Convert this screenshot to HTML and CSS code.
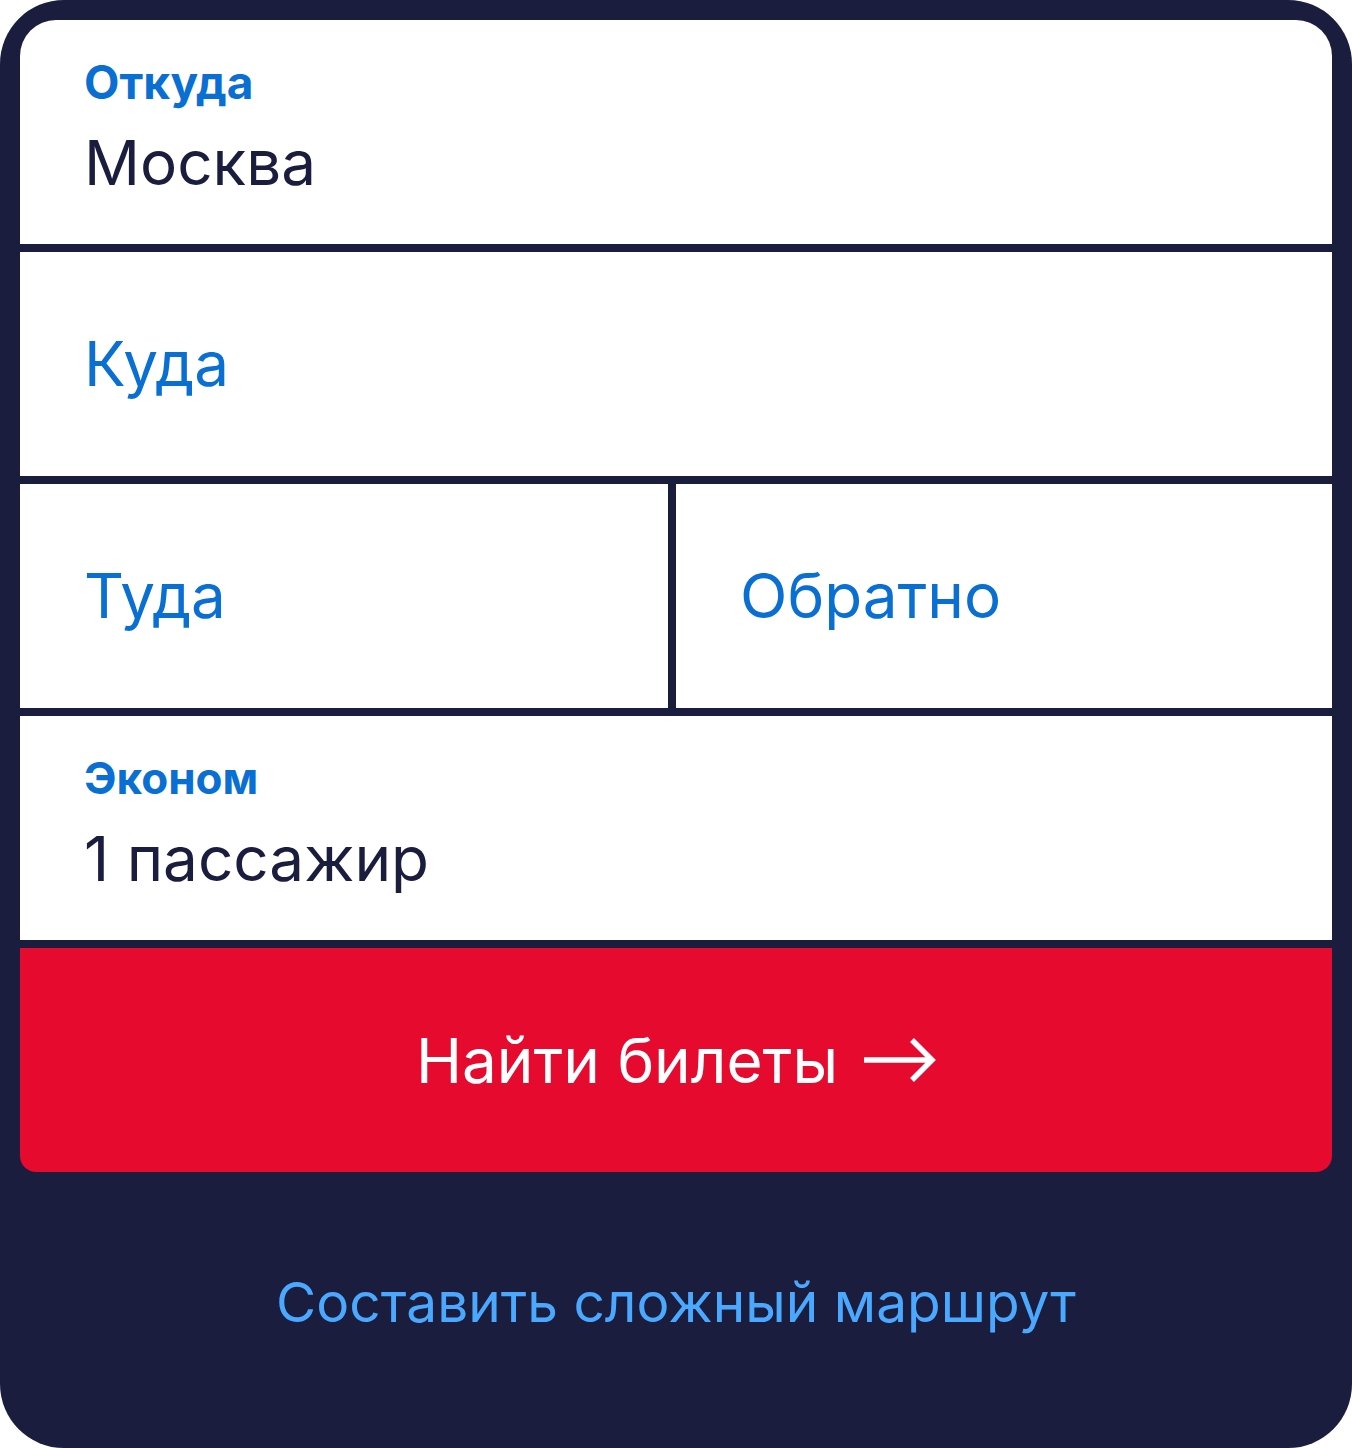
FILE: index.html
```html
<!DOCTYPE html>
<html lang="ru">
<head>
    <meta charset="UTF-8">
    <meta name="viewport" content="width=device-width, initial-scale=1.0">
    <title>Поиск авиабилетов</title>
    <link rel="stylesheet" href="styles.css">
</head>
<body>
    <div class="search-widget">
        <div class="search-form">
            <!-- Откуда -->
            <div class="field field-top field-filled">
                <div class="field-label label-large">Откуда</div>
                <div class="field-value">Москва</div>
            </div>

            <!-- Куда -->
            <div class="field">
                <div class="field-placeholder">Куда</div>
            </div>

            <!-- Даты -->
            <div class="field-row">
                <div class="field">
                    <div class="field-placeholder">Туда</div>
                </div>
                <div class="field">
                    <div class="field-placeholder">Обратно</div>
                </div>
            </div>

            <!-- Пассажиры -->
            <div class="field field-filled">
                <div class="field-label">Эконом</div>
                <div class="field-value">1 пассажир</div>
            </div>

            <button class="search-button" type="button">
                <span>Найти билеты</span>
                <svg class="arrow" width="72" height="44" viewBox="0 0 72 44" fill="none">
                    <path d="M0 22 H68" stroke="#fff" stroke-width="5.5"/>
                    <path d="M48 2 L68 22 L48 42" stroke="#fff" stroke-width="5.5"/>
                </svg>
            </button>
        </div>

        <div class="search-footer">
            <a class="route-link" href="#">Составить сложный маршрут</a>
        </div>
    </div>
</body>
</html>
```

FILE: styles.css
```css
* {
    margin: 0;
    padding: 0;
    box-sizing: border-box;
}

body {
    font-family: 'Inter', 'Noto Sans', sans-serif;
    background: #ffffff;
}

.search-widget {
    width: 1352px;
    height: 1448px;
    background: #1a1d3d;
    border-radius: 64px;
    padding: 20px 20px 0;
    display: flex;
    flex-direction: column;
}

.search-form {
    display: flex;
    flex-direction: column;
    gap: 8px;
}

.field {
    height: 224px;
    background: #ffffff;
    padding: 0 64px;
    display: flex;
    flex-direction: column;
    justify-content: center;
}

.field-filled {
    padding-bottom: 8px;
}

.field-top {
    border-radius: 36px 36px 0 0;
}

.field-row {
    display: grid;
    grid-template-columns: 648px 1fr;
    gap: 8px;
}

.field-label {
    font-size: 44px;
    line-height: 50px;
    font-weight: 700;
    color: #0a6fd3;
    margin-bottom: 20px;
}

.field-label.label-large {
    font-size: 46px;
    font-weight: 650;
}

.field-value {
    font-size: 62px;
    line-height: 72px;
    font-weight: 400;
    color: #1a1d3d;
}

.field-placeholder {
    font-size: 62px;
    line-height: 72px;
    color: #0a6fd3;
}

.search-button {
    height: 224px;
    border: none;
    border-radius: 0 0 16px 16px;
    background: #e50a2e;
    color: #ffffff;
    font-family: inherit;
    font-size: 62px;
    font-weight: 400;
    display: flex;
    justify-content: center;
    align-items: center;
    gap: 26px;
    cursor: pointer;
}

.arrow {
    display: block;
}

.search-footer {
    flex-grow: 1;
    display: flex;
    justify-content: center;
    align-items: center;
    padding-bottom: 16px;
}

.route-link {
    font-size: 55px;
    color: #4aa8ff;
    text-decoration: none;
}
```
